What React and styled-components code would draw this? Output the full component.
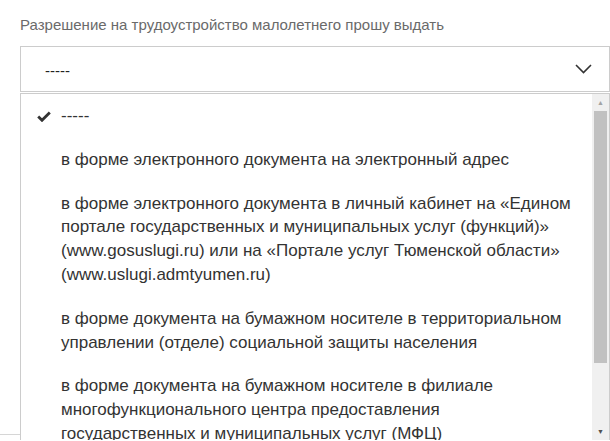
import React from 'react'
import styled, { createGlobalStyle } from 'styled-components';

const GlobalStyle = createGlobalStyle`
    html, body {
        margin: 0;
        padding: 0;
        background: #ffffff;
        font-family: "Liberation Sans", Arial, sans-serif;
        overflow: hidden;
    }
`;

const options = [
    "-----",
    "в форме электронного документа на электронный адрес",
    "в форме электронного документа в личный кабинет на «Едином портале государственных и муниципальных услуг (функций)» (www.gosuslugi.ru) или на «Портале услуг Тюменской области» (www.uslugi.admtyumen.ru)",
    "в форме документа на бумажном носителе в территориальном управлении (отделе) социальной защиты населения",
    "в форме документа на бумажном носителе в филиале многофункционального центра предоставления государственных и муниципальных услуг (МФЦ)",
];

const CheckIcon = () => (
    <svg width="14" height="11" viewBox="0 0 14 11">
        <path d="M1.2 5.6 L5 9.3 L12.8 1.5" fill="none" stroke="#333" strokeWidth="2.8" strokeLinejoin="miter" />
    </svg>
);

const Chevron = () => (
    <svg width="17" height="10" viewBox="0 0 17 10">
        <path d="M1 1 L8.5 8.5 L16 1" fill="none" stroke="#333" strokeWidth="1.6" />
    </svg>
);

const App = () => {
    return (
        <>
            <GlobalStyle />
            <Page>
                <Field>
                    <Label>Разрешение на трудоустройство малолетнего прошу выдать</Label>
                    <SelectBox>
                        <span>-----</span>
                        <Chevron />
                    </SelectBox>
                    <Dropdown>
                        <OptionList>
                            {options.map((text, i) => (
                                <Option key={i}>
                                    {i === 0 && <Check><CheckIcon /></Check>}
                                    {text}
                                </Option>
                            ))}
                        </OptionList>
                        <ScrollBar>
                            <Arrow $up>▲</Arrow>
                            <Thumb />
                            <Track />
                            <Arrow>▼</Arrow>
                        </ScrollBar>
                    </Dropdown>
                </Field>
                <NextSection />
            </Page>
        </>
    )
}

const Page = styled.div`
    padding: 15px 0 0 20px;
    height: 441px;
    box-sizing: border-box;
`;

const Field = styled.div`
    position: relative;
    z-index: 2;
`;

const Label = styled.div`
    font-size: 15px;
    line-height: 20px;
    color: #6a6a6a;
    margin-bottom: 11px;
`;

const SelectBox = styled.div`
    height: 46px;
    box-sizing: border-box;
    border: 1px solid #cccccc;
    display: flex;
    align-items: center;
    justify-content: space-between;
    padding: 0 17px 0 24px;
    font-size: 15px;
    color: #222;
    span {
        margin-top: 2px;
    }
`;

const Dropdown = styled.div`
    position: absolute;
    top: calc(100% + 1px);
    left: 0;
    right: 0;
    height: 346px;
    border: 1px solid #cccccc;
    border-bottom: none;
    background: #ffffff;
    display: flex;
`;

const OptionList = styled.ul`
    flex: 1;
    list-style: none;
    margin: 0;
    padding: 0;
    overflow: hidden;
`;

const Option = styled.li`
    position: relative;
    padding: 10px 16px 10px 40px;
    font-size: 17px;
    line-height: 23.8px;
    color: #333333;
`;

const Check = styled.span`
    position: absolute;
    left: 16px;
    top: 17px;
    display: flex;
`;

const ScrollBar = styled.div`
    width: 17px;
    background: #f0f0f0;
    display: flex;
    flex-direction: column;
    align-items: center;
`;

const Arrow = styled.div`
    height: 17px;
    width: 17px;
    display: flex;
    align-items: center;
    justify-content: center;
    font-size: 7px;
    color: ${p => p.$up ? '#a3a3a3' : '#505050'};
`;

const Thumb = styled.div`
    width: 13px;
    height: 252px;
    background: #c1c1c1;
`;

const Track = styled.div`
    flex: 1;
`;

const NextSection = styled.div`
    margin-top: 342px;
    margin-left: -20px;
    border-top: 1px solid #d6d6d6;
`;

export default App
